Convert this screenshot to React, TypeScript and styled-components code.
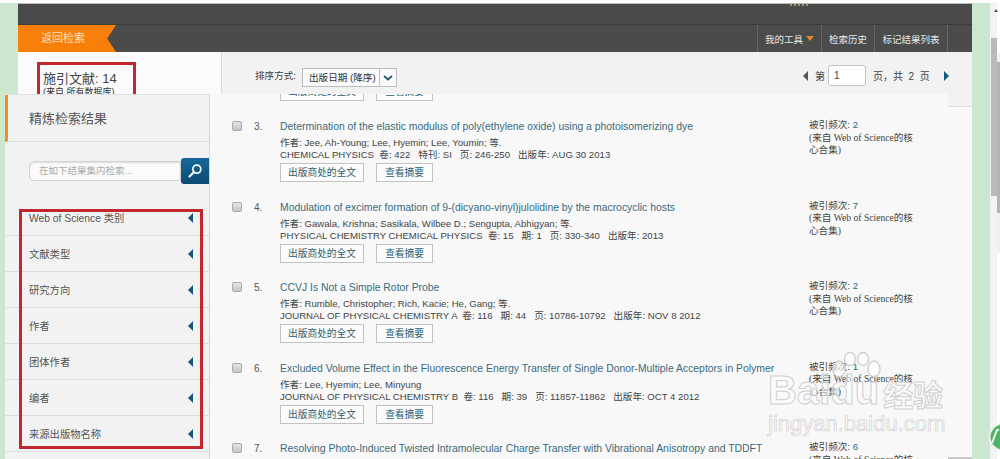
// React
import React from 'react'

// Components
import styled, { createGlobalStyle } from 'styled-components'

const sans = `"Liberation Sans", "Noto Sans CJK SC", sans-serif`
const serif = `"Liberation Serif", "Noto Sans CJK SC", serif`

const filters = ['Web of Science 类别', '文献类型', '研究方向', '作者', '团体作者', '编者', '来源出版物名称']

const records = [
    {
        no: 3,
        title: 'Determination of the elastic modulus of poly(ethylene oxide) using a photoisomerizing dye',
        authors: '作者: Jee, Ah-Young; Lee, Hyemin; Lee, Youmin; 等.',
        source: 'CHEMICAL PHYSICS  卷: 422   特刊: SI   页: 246-250   出版年: AUG 30 2013',
        cited: 2,
    },
    {
        no: 4,
        title: 'Modulation of excimer formation of 9-(dicyano-vinyl)julolidine by the macrocyclic hosts',
        authors: '作者: Gawala, Krishna; Sasikala, Wilbee D.; Sengupta, Abhigyan; 等.',
        source: 'PHYSICAL CHEMISTRY CHEMICAL PHYSICS  卷: 15   期: 1   页: 330-340   出版年: 2013',
        cited: 7,
    },
    {
        no: 5,
        title: 'CCVJ Is Not a Simple Rotor Probe',
        authors: '作者: Rumble, Christopher; Rich, Kacie; He, Gang; 等.',
        source: 'JOURNAL OF PHYSICAL CHEMISTRY A  卷: 116   期: 44   页: 10786-10792   出版年: NOV 8 2012',
        cited: 2,
    },
    {
        no: 6,
        title: 'Excluded Volume Effect in the Fluorescence Energy Transfer of Single Donor-Multiple Acceptors in Polymer',
        authors: '作者: Lee, Hyemin; Lee, Minyung',
        source: 'JOURNAL OF PHYSICAL CHEMISTRY B  卷: 116   期: 39   页: 11857-11862   出版年: OCT 4 2012',
        cited: 1,
    },
    {
        no: 7,
        title: 'Resolving Photo-Induced Twisted Intramolecular Charge Transfer with Vibrational Anisotropy and TDDFT',
        authors: '',
        source: '',
        cited: 6,
    },
]

export default function App() {
    return (
        <Page>
            <GlobalStyle />

            <Shell>
                <TopBand>
                    <TopDots />
                </TopBand>

                <NavBand>
                    <BackTab>返回检索</BackTab>
                    <NavItems>
                        <NavItem $width={64}>我的工具 <Caret /></NavItem>
                        <NavItem $width={53}>检索历史</NavItem>
                        <NavItem $width={73}>标记结果列表</NavItem>
                    </NavItems>
                </NavBand>

                <SortBand>
                    <CountCell>
                        <CountBox>
                            <CountTitle>施引文献: 14</CountTitle>
                            <CountNote>(来自 所有数据库)</CountNote>
                        </CountBox>
                    </CountCell>

                    <SortCell>
                        <SortLabel>排序方式:</SortLabel>
                        <SortSelect>
                            <SortValue>出版日期 (降序)</SortValue>
                            <SortToggle>
                                <svg width="10" height="6" viewBox="0 0 10 6">
                                    <path d="M1 1l4 3.5L9 1" fill="none" stroke="#1d5a78" strokeWidth="1.8" />
                                </svg>
                            </SortToggle>
                        </SortSelect>

                        <Pager>
                            <Triangle $dir="left" $color="#555" $gap />
                            <span>第</span>
                            <PageInput>1</PageInput>
                            <PageText>页，共  2  页</PageText>
                            <Triangle $dir="right" $color="#14587a" />
                        </Pager>
                    </SortCell>
                </SortBand>
            </Shell>

            <Scrollbar>
                <ScrollTrack>
                    <ScrollArrow />
                    <ScrollThumb />
                </ScrollTrack>
                <GhostTrack>
                    <GhostThumb />
                </GhostTrack>
            </Scrollbar>

            {/* panels that float over the page */}
            <Overlay>
                <Sidebar>
                    <SideHead>精炼检索结果</SideHead>

                    <SideSearch>
                        <SearchInput>在如下结果集内检索...</SearchInput>
                        <SearchButton>
                            <svg width="16" height="16" viewBox="0 0 16 16">
                                <circle cx="9.8" cy="6.2" r="4" fill="none" stroke="#fff" strokeWidth="1.7" />
                                <path d="M7 9L2.5 13.5" stroke="#fff" strokeWidth="2.2" strokeLinecap="round" />
                            </svg>
                        </SearchButton>
                    </SideSearch>

                    {filters.map((f) => (
                        <FilterRow key={f}>
                            {f}
                            <Triangle $dir="left" $color="#14587a" />
                        </FilterRow>
                    ))}

                    <RedFrame />
                </Sidebar>

                <Results>
                    <ClippedButtons>
                        <ActionButton $wide>出版商处的全文</ActionButton>
                        <ActionButton>查看摘要</ActionButton>
                    </ClippedButtons>

                    {records.map((r) => (
                        <Record key={r.no}>
                            <Check />
                            <RecordNo>{r.no}.</RecordNo>
                            <div>
                                <RecordTitle>{r.title}</RecordTitle>
                                <RecordLine>{r.authors}</RecordLine>
                                <RecordLine>{r.source}</RecordLine>
                                <Actions>
                                    <ActionButton $wide>出版商处的全文</ActionButton>
                                    <ActionButton>查看摘要</ActionButton>
                                </Actions>
                            </div>
                            <Cited>
                                <div>被引频次: <CitedNo>{r.cited}</CitedNo></div>
                                <CitedNote>(来自 Web of Science的核<br />心合集)</CitedNote>
                            </Cited>
                        </Record>
                    ))}
                </Results>
            </Overlay>

            <Watermark aria-hidden="true">
                <BaiduWord>Bai</BaiduWord>
                <Paw width="52" height="54" viewBox="0 0 52 54">
                    <g fill="rgba(255,255,255,0.55)" stroke="#cfcfcf" strokeWidth="1.4">
                        <ellipse cx="9" cy="17" rx="6" ry="8" />
                        <ellipse cx="20" cy="7" rx="5.5" ry="6.5" />
                        <ellipse cx="33" cy="7" rx="5.5" ry="6.5" />
                        <ellipse cx="44" cy="17" rx="6" ry="8" />
                    </g>
                </Paw>
                <BaiduWord $tail>du</BaiduWord>
                <ChineseWord>经验</ChineseWord>
                <DomainWord>jingyan.baidu.com</DomainWord>
            </Watermark>

            <CornerBadge>
                <svg width="30" height="30" viewBox="0 0 30 30">
                    <circle cx="15" cy="15" r="13.5" fill="#4fb565" stroke="#e9f3ea" strokeWidth="2" />
                    <path d="M4 21L9 8l2 0" fill="none" stroke="#fff" strokeWidth="1.8" />
                </svg>
            </CornerBadge>
        </Page>
    )
}

const GlobalStyle = createGlobalStyle`
    html, body {
        margin: 0;
        padding: 0;
        overflow: hidden;
    }
    * {
        box-sizing: border-box;
    }
`

const Page = styled.div`
    position: relative;
    display: flex;
    justify-content: flex-start;
    width: 1000px;
    height: 459px;
    overflow: hidden;
    padding-left: 18px;
    background: #cde6ce;
    border-top: 3px solid #fdfdfd;
    font-family: ${sans};
    color: #444;
`

const Shell = styled.div`
    width: 954px;
    margin-right: 18px;
    background: #f8f8f8;
    border-top: 1px solid #bbb;
    border-bottom: 2px solid #c8c8c8;
`

const TopBand = styled.div`
    height: 21px;
    background: #4a4a4a;
    border-bottom: 1px solid #3c3c3c;
`

const TopDots = styled.div`
    width: 18px;
    height: 2px;
    margin-left: 772px;
    border-bottom: 2px dotted #a8906a;
`

const NavBand = styled.div`
    display: flex;
    justify-content: space-between;
    height: 27px;
    background: #4b4b4b;
`

const BackTab = styled.div`
    width: 98px;
    padding-left: 23px;
    background: #f77f0a;
    color: #f8e2c4;
    font-size: 11px;
    line-height: 27px;
    clip-path: polygon(0 0, 100% 0, 91% 50%, 100% 100%, 0 100%);
`

const NavItems = styled.div`
    display: flex;
    margin-right: 24px;
    border-left: 1px solid #666;
`

const NavItem = styled.div<{ $width: number }>`
    display: flex;
    align-items: center;
    justify-content: center;
    gap: 3px;
    width: ${(p) => p.$width}px;
    border-right: 1px solid #666;
    color: #e8e8e8;
    font-size: 9.5px;
`

const Caret = styled.i`
    width: 0;
    height: 0;
    border: 4px solid transparent;
    border-top: 5px solid #dc8a2c;
    border-bottom: 0;
`

const SortBand = styled.div`
    display: flex;
    height: 55px;
    border-bottom: 1px solid #dcdcdc;
`

const CountCell = styled.div`
    width: 204px;
    padding: 10px 0 0 19px;
    background: #fbfbfb;
    border-right: 1px solid #ddd;
`

const CountBox = styled.div`
    width: 99px;
    height: 40px;
    padding: 6px 0 0 3px;
    border: 3px solid #c2262e;
    border-bottom: 0;
`

const CountTitle = styled.div`
    font-size: 13px;
    line-height: 15px;
    color: #444;
`

const CountNote = styled.div`
    font-size: 9px;
    line-height: 12px;
    color: #333;
`

const SortCell = styled.div`
    display: flex;
    flex: 1;
    align-items: flex-start;
    padding: 13px 23px 0 33px;
    background: #f2f2f2;
    font-size: 10px;
`

const SortLabel = styled.div`
    width: 47px;
    margin-top: 5px;
    font-size: 9.6px;
    line-height: 12px;
`

const SortSelect = styled.div`
    display: flex;
    width: 95px;
    height: 19px;
    margin-top: 3px;
    background: #fafafa;
    border: 1px solid #bdbdbd;
    font-size: 9.6px;
`

const SortValue = styled.div`
    flex: 1;
    padding-left: 6px;
    line-height: 17px;
    color: #333;
`

const SortToggle = styled.div`
    display: flex;
    align-items: center;
    justify-content: center;
    width: 17px;
    border-left: 1px solid #bdbdbd;
`

const Pager = styled.div`
    display: flex;
    align-items: center;
    height: 21px;
    margin-left: auto;
`

const PageInput = styled.div`
    width: 38px;
    height: 21px;
    margin: 0 7px 0 3px;
    padding-left: 5px;
    background: #fff;
    border: 1px solid #c4c4c4;
    border-radius: 3px;
    line-height: 19px;
`

const PageText = styled.span`
    width: 71px;
    white-space: pre;
`

const Triangle = styled.i<{ $dir: 'left' | 'right', $color: string, $gap?: boolean }>`
    flex: none;
    width: 0;
    height: 0;
    margin-right: ${(p) => (p.$gap ? '7px' : '0')};
    border-style: solid;
    border-color: transparent;
    border-width: 5px;
    ${(p) => (p.$dir === 'left' ? 'border-left-width: 0;' : 'border-right-width: 0;')}
    ${(p) => (p.$dir === 'left'
        ? `border-right-color: ${p.$color};`
        : `border-left-color: ${p.$color};`)}
`

const Scrollbar = styled.div`
    display: flex;
    flex: none;
    width: 10px;
    background: #fff;
`

const ScrollTrack = styled.div`
    width: 7px;
    padding-left: 1px;
    background: #f3f3f3;
`

const ScrollArrow = styled.div`
    width: 0;
    height: 0;
    margin: 6px 0 0 3px;
    border: 2px solid transparent;
    border-bottom: 3px solid #555;
    border-top: 0;
`

const ScrollThumb = styled.div`
    width: 6px;
    height: 158px;
    margin-top: 26px;
    background: #b9b9b9;
`

const GhostTrack = styled.div`
    width: 3px;
    height: 200px;
    margin-top: 50px;
    padding-top: 9px;
    background: #f1f1f1;
`

const GhostThumb = styled.div`
    height: 151px;
    background: #b4b4b4;
`

const Overlay = styled.div`
    position: absolute;
    top: 91px;
    left: 5px;
    display: flex;
    width: 943px;
    height: 365px;
`

const Sidebar = styled.div`
    position: relative;
    flex: none;
    width: 205px;
    background: #f2f2f2;
    border-top: 1px solid #e2e2e2;
    border-right: 1px solid #d8d8d8;
    font-size: 10.3px;
`

const SideHead = styled.div`
    height: 47px;
    padding-left: 21px;
    background: #f2f2f2;
    border-left: 3px solid #ef8f22;
    border-bottom: 1px solid #dedede;
    font-size: 13px;
    line-height: 47px;
    color: #555;
`

const SideSearch = styled.div`
    display: flex;
    align-items: center;
    height: 58px;
    padding: 0 0 0 24px;
    border-bottom: 0;
`

const SearchInput = styled.div`
    width: 152px;
    height: 20px;
    padding-left: 9px;
    background: #fbfbfb;
    border: 1px solid #d2d2d2;
    border-radius: 5px 0 0 5px;
    box-shadow: inset 0 1px 2px #ddd;
    font-size: 9.5px;
    line-height: 18px;
    color: #aaa;
`

const SearchButton = styled.div`
    display: flex;
    align-items: center;
    justify-content: center;
    width: 28px;
    height: 26px;
    background: linear-gradient(#14699a, #0c4a70);
    border-radius: 3px 0 0 3px;
`

const FilterRow = styled.div`
    display: flex;
    align-items: center;
    justify-content: space-between;
    height: 36px;
    padding: 0 16px 0 24px;
    border-bottom: 1px solid #dcdcdc;
    color: #555;
`

const RedFrame = styled.div`
    position: absolute;
    top: 114px;
    left: 14px;
    width: 184px;
    height: 240px;
    border: 3px solid #c2262e;
    pointer-events: none;
`

const Results = styled.div`
    flex: 1;
    overflow: hidden;
    background: #f8f8f8;
`

const ClippedButtons = styled.div`
    display: flex;
    gap: 12px;
    height: 37px;
    margin-top: -12px;
    padding-left: 70px;
`

const Record = styled.div`
    display: grid;
    grid-template-columns: 22px 26px 529px 1fr;
    height: 80.5px;
    padding-left: 22px;
`

const Check = styled.div`
    width: 10px;
    height: 10px;
    margin-top: 2px;
    background: linear-gradient(#e4e4e4, #c6c6c6);
    border: 1px solid #aaa;
    border-radius: 2px;
`

const RecordNo = styled.div`
    padding-top: 1px;
    font-size: 10px;
    line-height: 14px;
    color: #555;
`

const RecordTitle = styled.div`
    margin-bottom: 3px;
    padding-top: 1px;
    font-size: 10.4px;
    line-height: 14px;
    color: #3a6a7c;
    white-space: nowrap;
`

const RecordLine = styled.div`
    height: 12px;
    font-size: 9.6px;
    line-height: 12px;
    color: #444;
    white-space: pre;
`

const Actions = styled.div`
    display: flex;
    gap: 12px;
    margin-top: 2px;
`

const ActionButton = styled.div<{ $wide?: boolean }>`
    width: ${(p) => (p.$wide ? '84px' : '57px')};
    height: 19px;
    background: #fcfcfc;
    border: 1px solid #c2c2c2;
    font-size: 9.7px;
    line-height: 17px;
    text-align: center;
    color: #2e5c6e;
`

const Cited = styled.div`
    width: 108px;
    font-size: 9.6px;
    line-height: 12.5px;
    color: #444;
`

const CitedNo = styled.span`
    color: #2b6a80;
`

const CitedNote = styled.div`
    font-family: ${serif};
    white-space: nowrap;
`

const Watermark = styled.div`
    position: absolute;
    top: 349px;
    left: 768px;
    display: flex;
    flex-wrap: wrap;
    align-items: flex-start;
    width: 182px;
    pointer-events: none;
`

const BaiduWord = styled.span<{ $tail?: boolean }>`
    margin: ${(p) => (p.$tail ? '18px 0 0 -52px' : '18px 0 0 0')};
    font: bold 40px/40px ${sans};
    color: rgba(255, 255, 255, 0.55);
    -webkit-text-stroke: 1px #cfcfcf;
`

const Paw = styled.svg`
    flex: none;
`

const ChineseWord = styled.span`
    margin: 25px 0 0 4px;
    font: bold 30px/32px "Noto Sans CJK SC", sans-serif;
    color: rgba(255, 255, 255, 0.55);
    -webkit-text-stroke: 1px #cfcfcf;
`

const DomainWord = styled.span`
    flex: none;
    width: 182px;
    margin-top: 1px;
    font: 22px/26px ${sans};
    color: rgba(255, 255, 255, 0.55);
    -webkit-text-stroke: 0.7px #d2d2d2;
`

const CornerBadge = styled.div`
    position: absolute;
    top: 419px;
    left: 988px;
`
